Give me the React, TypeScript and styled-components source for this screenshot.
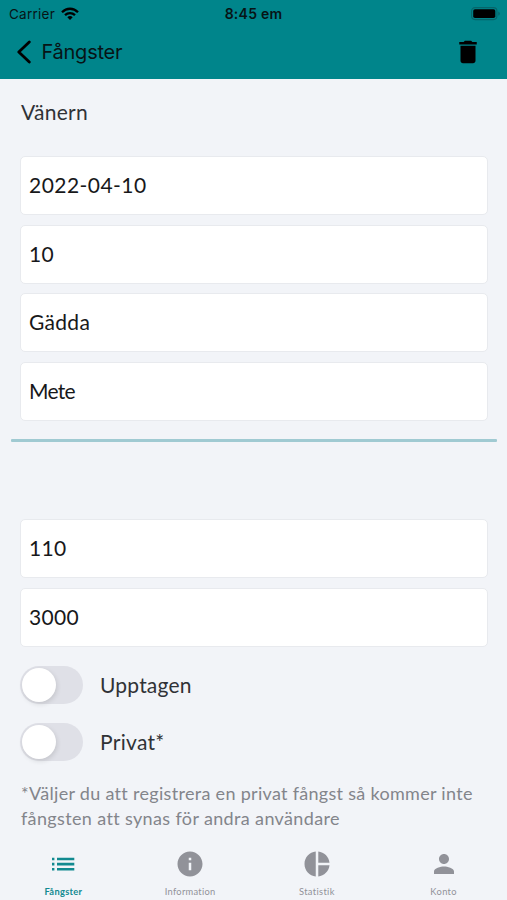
import React from "react";
import styled, { createGlobalStyle } from "styled-components";
import {
  MdDelete,
  MdInfo,
  MdPerson,
  MdPieChart,
} from "react-icons/md";

const GlobalStyle = createGlobalStyle`
  * { box-sizing: border-box; }
  body { margin: 0; background: #f2f4f8; }
`;

const Screen = styled.div`
  width: 507px;
  height: 900px;
  display: flex;
  flex-direction: column;
  overflow: hidden;
  background: #f2f4f8;
  color: #303236;
  font-family: Lato, "Open Sans", sans-serif;
`;

const Header = styled.header`
  height: 79px;
  flex: none;
  background: #00858b;
  color: #071416;
  font-family: Inter, sans-serif;
`;

const StatusBar = styled.div`
  height: 27px;
  display: grid;
  grid-template-columns: 1fr auto 1fr;
  align-items: center;
  padding: 0 7px 0 9px;
  font-size: 13.5px;
`;

const Carrier = styled.div`
  display: flex;
  align-items: center;
  gap: 6px;
  letter-spacing: 0.25px;
`;

const Clock = styled.div`
  font-size: 14px;
  font-weight: 600;
  letter-spacing: 0.25px;
  margin-right: 2px;
`;

const BatterySlot = styled.div`
  display: flex;
  justify-content: flex-end;
`;

const NavBar = styled.div`
  height: 50px;
  display: flex;
  align-items: center;
  justify-content: space-between;
  padding: 0 24px 0 17px;
`;

const BackButton = styled.button`
  display: flex;
  align-items: center;
  gap: 9.5px;
  padding: 0;
  border: 0;
  background: none;
  color: inherit;
  font: 400 20px Inter, sans-serif;
  letter-spacing: -0.25px;
`;

const IconButton = styled.button`
  display: flex;
  padding: 0;
  border: 0;
  background: none;
  color: #000;
`;

const Content = styled.main`
  flex: 1;
  padding: 18px 19px 0 20px;
`;

const Place = styled.h1<{ $track: number }>`
  margin: 0 0 29px 1px;
  font-size: 21px;
  line-height: 30px;
  height: 30px;
  font-weight: 400;
  letter-spacing: ${(p) => p.$track}px;
`;

const Fields = styled.div`
  display: grid;
  grid-auto-rows: 59px;
  row-gap: 9.5px;
`;

const Field = styled.div<{ $track: number }>`
  display: flex;
  align-items: center;
  padding: 0 8px 2px;
  background: #fff;
  border: 1px solid #e8eaee;
  border-radius: 5px;
  color: #17181a;
  font-size: 21px;
  letter-spacing: ${(p) => p.$track}px;
`;

const Divider = styled.hr`
  height: 3px;
  margin: 18.5px -9px 77px -9px;
  border: 0;
  border-radius: 1px;
  background: #a0cad2;
`;

const Toggles = styled.div`
  display: grid;
  row-gap: 19px;
  margin-top: 19.5px;
`;

const ToggleRow = styled.label<{ $track: number }>`
  display: flex;
  align-items: center;
  gap: 17px;
  height: 38px;
  font-size: 21px;
  letter-spacing: ${(p) => p.$track}px;
`;

const ToggleText = styled.span`
  padding-bottom: 1px;
`;

const Switch = styled.span`
  display: flex;
  align-items: center;
  width: 63px;
  height: 38px;
  padding: 0 2px;
  border-radius: 19px;
  background: #dfe0e7;
`;

const Thumb = styled.span`
  width: 34px;
  height: 34px;
  border-radius: 50%;
  background: #fff;
  box-shadow: 1px 2px 5px rgba(0, 0, 0, 0.12);
`;

const Note = styled.p`
  margin: 20px 0 0 1px;
  color: #83858b;
  font-size: 18px;
  line-height: 25px;
`;

const NoteLine = styled.span<{ $track: number }>`
  display: block;
  white-space: nowrap;
  letter-spacing: ${(p) => p.$track}px;
`;

const TabBar = styled.nav`
  flex: none;
  height: 51px;
  display: grid;
  grid-template-columns: repeat(4, 1fr);
`;

const Tab = styled.a<{ $active?: boolean; $track: number }>`
  display: flex;
  flex-direction: column;
  align-items: center;
  color: ${(p) => (p.$active ? "#128a90" : "#919299")};
  font-size: 9.3px;
  line-height: 12px;
  font-weight: ${(p) => (p.$active ? 700 : 400)};
  letter-spacing: ${(p) => p.$track}px;
`;

const TabIcon = styled.span`
  height: 30px;
  margin-bottom: 7px;
  display: flex;
  align-items: center;
`;

const WifiIcon = () => (
  <svg width="18" height="14" viewBox="0 0 18 14" fill="none" stroke="#000" strokeWidth="2.3">
    <path d="M1 5.2C5.6 .6 12.4 .6 17 5.2" />
    <path d="M4 8.2C6.9 5.4 11.1 5.4 14 8.2" />
    <path d="M9 13 6.3 10.3a3.8 3.8 0 0 1 5.4 0Z" fill="#000" stroke="none" />
  </svg>
);

const BatteryIcon = () => (
  <svg width="30" height="14" viewBox="0 0 30 14">
    <rect x="1.6" y=".6" width="25.3" height="12" rx="3.5" fill="none" stroke="#06656a" strokeWidth="1.1" />
    <rect x="3.2" y="2.2" width="22.1" height="8.8" rx="1.8" fill="#000" />
    <path d="M28.3 4.5c2 .8 2 3.4 0 4.2Z" fill="#06656a" />
  </svg>
);

const BackIcon = () => (
  <svg width="15" height="24" viewBox="0 0 15 24" fill="none" stroke="#000" strokeWidth="2.8" strokeLinecap="round" strokeLinejoin="round">
    <path d="M12.3 2 1.8 12l10.5 10" />
  </svg>
);

const ListIcon = () => (
  <svg width="24" height="14" viewBox="0 0 24 14" fill="currentColor">
    <path d="M1 .7h2.4v2.6H1zM1 5.8h2.4v2.6H1zM1 10.9h2.4v2.6H1zM6 .7h17.3v2.6H6zM6 5.8h17.3v2.6H6zM6 10.9h17.3v2.6H6z" />
  </svg>
);

const catchFields = [
  { value: "2022-04-10", track: 0.45 },
  { value: "10", track: 0.3 },
  { value: "Gädda", track: 0.3 },
  { value: "Mete", track: -0.7 },
];

const sizeFields = [
  { value: "110", track: 0.3 },
  { value: "3000", track: 0.3 },
];

const toggles = [
  { label: "Upptagen", track: 0.2 },
  { label: "Privat*", track: 0.3 },
];

const tabs = [
  { label: "Fångster", icon: <ListIcon />, active: true, track: 0.3 },
  { label: "Information", icon: <MdInfo size={30} />, track: 0.3 },
  { label: "Statistik", icon: <MdPieChart size={30} />, track: 0.35 },
  { label: "Konto", icon: <MdPerson size={30} />, track: 0.35 },
];

export default function App() {
  return (
    <Screen>
      <GlobalStyle />
      <Header>
        <StatusBar>
          <Carrier>
            <span>Carrier</span>
            <WifiIcon />
          </Carrier>
          <Clock>8:45 em</Clock>
          <BatterySlot>
            <BatteryIcon />
          </BatterySlot>
        </StatusBar>
        <NavBar>
          <BackButton>
            <BackIcon />
            <span>Fångster</span>
          </BackButton>
          <IconButton aria-label="Ta bort">
            <MdDelete size={30} />
          </IconButton>
        </NavBar>
      </Header>
      <Content>
        <Place $track={0.25}>Vänern</Place>
        <Fields>
          {catchFields.map((f) => (
            <Field key={f.value} $track={f.track}>{f.value}</Field>
          ))}
        </Fields>
        <Divider />
        <Fields>
          {sizeFields.map((f) => (
            <Field key={f.value} $track={f.track}>{f.value}</Field>
          ))}
        </Fields>
        <Toggles>
          {toggles.map((t) => (
            <ToggleRow key={t.label} $track={t.track}>
              <Switch>
                <Thumb />
              </Switch>
              <ToggleText>{t.label}</ToggleText>
            </ToggleRow>
          ))}
        </Toggles>
        <Note>
          <NoteLine $track={0.3}>*Väljer du att registrera en privat fångst så kommer inte</NoteLine>
          <NoteLine $track={0.36}>fångsten att synas för andra användare</NoteLine>
        </Note>
      </Content>
      <TabBar>
        {tabs.map((t) => (
          <Tab key={t.label} $active={t.active} $track={t.track}>
            <TabIcon>{t.icon}</TabIcon>
            {t.label}
          </Tab>
        ))}
      </TabBar>
    </Screen>
  );
}
